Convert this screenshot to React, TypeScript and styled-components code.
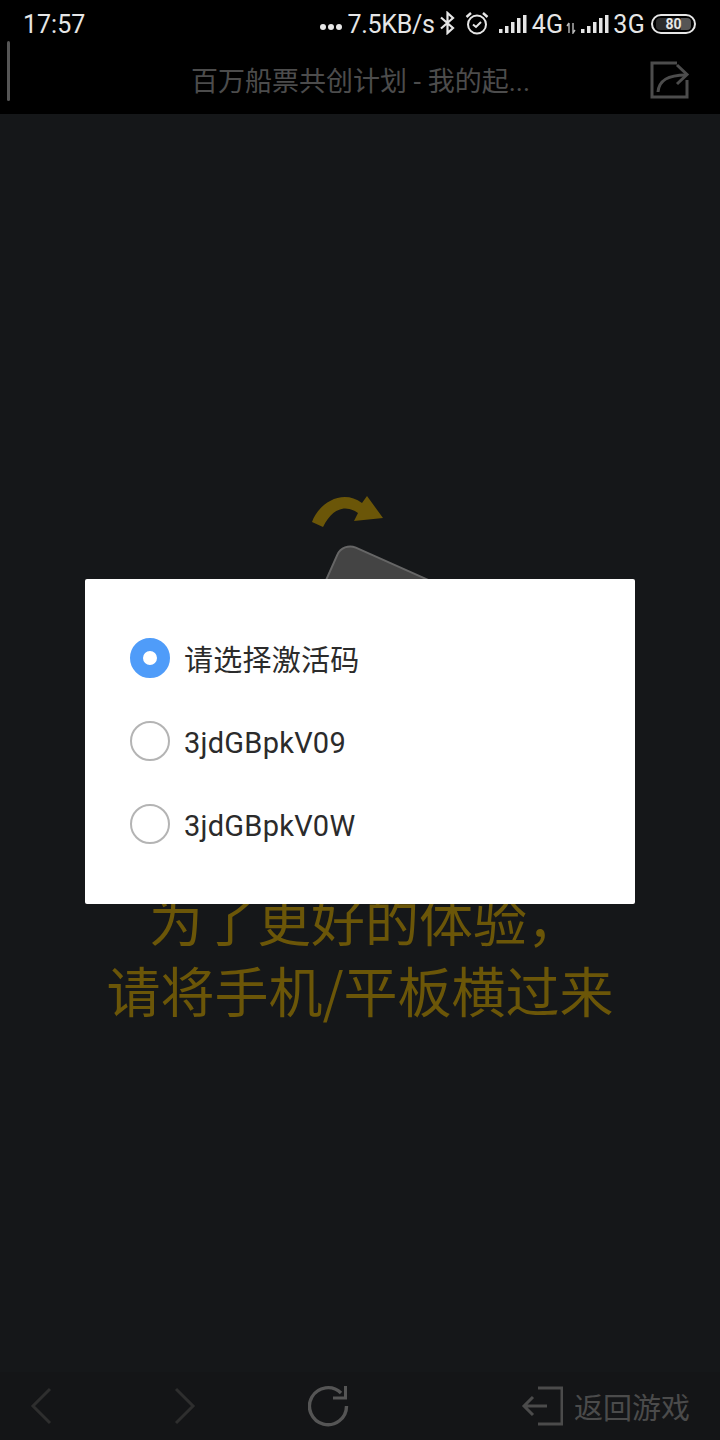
import React, { FunctionComponent } from 'react'
import styled, { createGlobalStyle } from 'styled-components'

const CJK = `Roboto, "Noto Sans CJK SC", sans-serif`

const GlobalStyle = createGlobalStyle`
  html, body {
    margin: 0;
    padding: 0;
    background: #151719;
  }
  * {
    box-sizing: border-box;
  }
`

const Page = styled.div`
  position: relative;
  display: flex;
  flex-direction: column;
  width: 720px;
  height: 1440px;
  overflow: hidden;
  background-color: #151719;
  font-family: ${CJK};
`

const Top = styled.header`
  height: 114px;
  background-color: #000;
`

const StatusBar = styled.div`
  display: flex;
  align-items: center;
  justify-content: space-between;
  height: 46px;
  padding: 2px 24px 0 23px;
  color: #e6e6e6;
  font-size: 25px;
`

const StatusRight = styled.div`
  display: flex;
  align-items: center;
`

const Dots = styled.svg`
  width: 24px;
  height: 8px;
  margin-right: 5px;
  margin-top: 6px;
`

const Speed = styled.span`
  letter-spacing: -0.3px;
`

const NetLabel = styled.span<{ $gap?: number }>`
  margin-left: ${p => p.$gap ?? 0}px;
  letter-spacing: 0.3px;
`

const StatusIcon = styled.svg<{ $left?: number; $top?: number }>`
  display: block;
  flex: none;
  margin-left: ${p => p.$left ?? 0}px;
  margin-top: ${p => p.$top ?? 0}px;
`

const Battery = styled.div`
  display: flex;
  align-items: center;
  width: 45px;
  height: 20px;
  margin-left: 6px;
  padding: 2px 3px;
  border: 2px solid #e6e6e6;
  border-radius: 10px;
`

const BatteryFill = styled.div`
  width: 100%;
  height: 12px;
  border-radius: 4px;
  background: linear-gradient(to right, #2c2c2c 0 72%, #555 72%);
  color: #e6e6e6;
  font-size: 14px;
  font-weight: 700;
  line-height: 12px;
  text-align: center;
`

const TitleBar = styled.div`
  position: relative;
  display: flex;
  align-items: center;
  justify-content: center;
  height: 68px;
`

const Handle = styled.div`
  position: absolute;
  left: 7px;
  top: -5px;
  width: 3px;
  height: 60px;
  border-radius: 2px;
  background-color: #555;
`

const Title = styled.h1`
  margin: 3px 0 0 1px;
  color: #4c4c4c;
  font-size: 27px;
  font-weight: 400;
  line-height: 64px;
`

const ShareIcon = styled.svg`
  position: absolute;
  right: 30px;
  top: 14px;
`

const Main = styled.main`
  flex: 1;
  display: flex;
  flex-direction: column;
  align-items: center;
  padding-top: 378px;
`

const Hero = styled.svg`
  display: block;
  width: 200px;
  height: 391px;
`

const Hint = styled.p`
  margin: 0;
  color: #6b5608;
  font-size: 54px;
  line-height: 71px;
  text-align: center;
  font-family: "Noto Sans CJK SC", sans-serif;
`

const HintLine = styled.span<{ $indent?: number }>`
  display: block;
  padding-left: ${p => p.$indent ?? 0}px;
`

const Overlay = styled.div`
  position: absolute;
  left: 85px;
  top: 579px;
  display: flex;
  flex-direction: column;
  justify-content: center;
  gap: 43px;
  width: 550px;
  height: 325px;
  padding: 0 45px 1px;
  background-color: #fff;
  border-radius: 2px;
`

const Option = styled.label`
  display: flex;
  align-items: center;
  gap: 14px;
  height: 40px;
  color: #2b2b2b;
  font-size: 29px;
  letter-spacing: 0.25px;
`

const OptionText = styled.span<{ $checked?: boolean }>`
  padding-top: ${p => (p.$checked ? 0 : 3)}px;
`

const Radio = styled.span<{ $checked?: boolean }>`
  flex: none;
  width: 40px;
  height: 40px;
  border-radius: 50%;
  border: ${p => (p.$checked ? '13px solid #4f9cf9' : '2px solid #b4b4b4')};
  background-color: #fff;
`

const BottomBar = styled.footer`
  display: flex;
  align-items: center;
  height: 68px;
  padding: 0 30px;
  background-color: #141517;
`

const NavIcon = styled.svg<{ $left?: number }>`
  display: block;
  flex: none;
  margin-left: ${p => p.$left ?? 0}px;
`

const BackGame = styled.div`
  display: flex;
  align-items: center;
  gap: 11px;
  margin-left: auto;
  color: #4b4b4b;
  font-size: 29px;
`

const Signal: FunctionComponent<{ left: number }> = ({ left }) => (
  <StatusIcon $left={left} width="28" height="20" viewBox="0 0 28 20" fill="#e6e6e6">
    <rect x="0" y="15" width="3.5" height="4" />
    <rect x="6" y="12" width="3.5" height="7" />
    <rect x="12" y="8" width="3.5" height="11" />
    <rect x="18" y="4" width="3.5" height="15" />
    <rect x="24" y="1" width="3.5" height="18" />
  </StatusIcon>
)

const options = [
  { label: '请选择激活码', checked: true },
  { label: '3jdGBpkV09', checked: false },
  { label: '3jdGBpkV0W', checked: false },
]

const App: FunctionComponent = () => (
  <Page>
    <GlobalStyle />
    <Top>
      <StatusBar>
        <span>17:57</span>
        <StatusRight>
          <Dots viewBox="0 0 24 8" fill="#e6e6e6">
            <circle cx="4" cy="4" r="3" />
            <circle cx="12" cy="4" r="3" />
            <circle cx="20" cy="4" r="3" />
          </Dots>
          <Speed>7.5KB/s</Speed>
          <StatusIcon $left={5} $top={-2} width="15" height="24" viewBox="0 0 15 24" fill="none" stroke="#e6e6e6" strokeWidth="2.2">
            <path d="M1 6.5 L13 17 L7.5 22 V2 L13 7 L1 17.5" />
          </StatusIcon>
          <StatusIcon $left={10} $top={-3} width="24" height="24" viewBox="0 0 24 24" fill="none" stroke="#e6e6e6" strokeWidth="2">
            <circle cx="12" cy="13.5" r="9" />
            <path d="M8 13.5 L11 16 L16 11" />
            <path d="M1.5 6 L6 2 M22.5 6 L18 2" strokeWidth="2.4" />
          </StatusIcon>
          <Signal left={10} />
          <NetLabel $gap={5}>4G</NetLabel>
          <StatusIcon $left={3} $top={8} width="10" height="12" viewBox="0 0 10 12" fill="none" stroke="#bbb" strokeWidth="1.4">
            <path d="M3 1 V11 M1 4 L3 1 M7 1 V11 L9 8" />
          </StatusIcon>
          <Signal left={5} />
          <NetLabel $gap={4}>3G</NetLabel>
          <Battery>
            <BatteryFill>80</BatteryFill>
          </Battery>
        </StatusRight>
      </StatusBar>
      <TitleBar>
        <Handle />
        <Title>百万船票共创计划 - 我的起...</Title>
        <ShareIcon width="40" height="40" viewBox="0 0 40 40" fill="none" stroke="#4c4c4c" strokeWidth="3">
          <path d="M27 3 H2 V37 H37 V20" />
          <path d="M8 32 C9 20 18 15 36 15" />
          <path d="M27 5 L37 14.5 L27 24" />
        </ShareIcon>
      </TitleBar>
    </Top>

    <Main>
      <Hero viewBox="0 0 200 391">
        <path d="M52 30 C58 12 82 -4 102 11 L107 4 L123 26 L94 29 L98 21 C86 12 72 16 63 35 Z" fill="#6b5608" />
        <rect x="83" y="50" width="120" height="230" rx="14" fill="#444" stroke="#666" strokeWidth="2" transform="rotate(24 83 50)" />
      </Hero>
      <Hint>
        <HintLine $indent={10}>为了更好的体验，</HintLine>
        <HintLine>请将手机/平板横过来</HintLine>
      </Hint>
    </Main>

    <Overlay>
      {options.map(o => (
        <Option key={o.label}>
          <Radio $checked={o.checked} />
          <OptionText $checked={o.checked}>{o.label}</OptionText>
        </Option>
      ))}
    </Overlay>

    <BottomBar>
      <NavIcon width="24" height="38" viewBox="0 0 24 38" fill="none" stroke="#2e2e2e" strokeWidth="3">
        <path d="M20 2 L3 19 L20 36" />
      </NavIcon>
      <NavIcon $left={118} width="24" height="38" viewBox="0 0 24 38" fill="none" stroke="#2e2e2e" strokeWidth="3">
        <path d="M4 2 L21 19 L4 36" />
      </NavIcon>
      <NavIcon $left={112} width="42" height="42" viewBox="0 0 42 42" fill="none" stroke="#555" strokeWidth="3.4">
        <path d="M38.5 21 A18.5 18.5 0 1 1 33 8" />
        <path d="M37.5 1 V13 H25" strokeWidth="3" />
      </NavIcon>
      <BackGame>
        <NavIcon width="42" height="40" viewBox="0 0 42 40" fill="none" stroke="#4b4b4b" strokeWidth="3">
          <path d="M17 2 H41 V38 H17" />
          <path d="M26 20 H3 M12 11 L3 20 L12 29" />
        </NavIcon>
        返回游戏
      </BackGame>
    </BottomBar>
  </Page>
)

export default App
